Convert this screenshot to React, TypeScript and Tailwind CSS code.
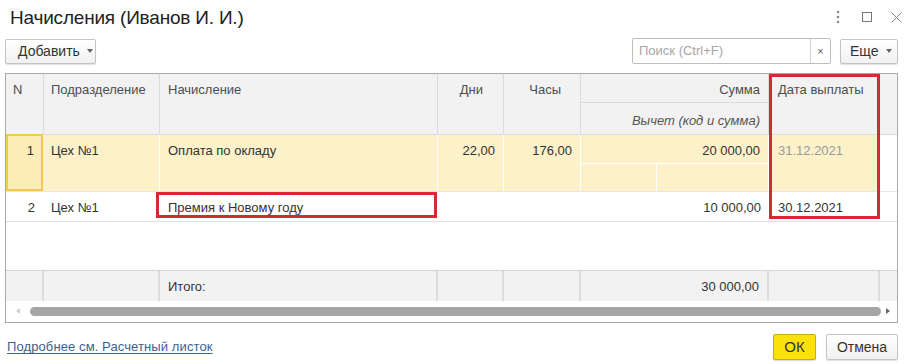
import React from "react";

const font = { fontFamily: '"Liberation Sans", Arial, sans-serif' };

function Caret() {
  return (
    <svg width="6" height="4" viewBox="0 0 6 4" className="ml-[7px]">
      <path d="M0 0 L6 0 L3 4 Z" fill="#666" />
    </svg>
  );
}

const cols = "grid grid-cols-[38px_116px_278px_66px_77px_188px_111px_17px]";

export default function App() {
  return (
    <div className="relative w-[911px] h-[364px] bg-white overflow-hidden text-[#333]" style={font}>
      {/* Title bar */}
      <div className="flex items-center h-[34px] pl-[10px] pr-[9px]">
        <div className="text-[19px] text-[#222] leading-none tracking-[-0.2px] pt-[1px]">Начисления (Иванов И. И.)</div>
        <div className="ml-auto flex items-center text-[#888]">
          <svg width="4" height="14" viewBox="0 0 4 14">
            <circle cx="2" cy="2" r="1.3" fill="#888" />
            <circle cx="2" cy="7" r="1.3" fill="#888" />
            <circle cx="2" cy="12" r="1.3" fill="#888" />
          </svg>
          <svg width="10" height="10" viewBox="0 0 10 10" className="ml-[22px]">
            <rect x="0.5" y="0.5" width="9" height="9" fill="none" stroke="#777" strokeWidth="1" />
          </svg>
          <svg width="11" height="11" viewBox="0 0 11 11" className="ml-[19px]">
            <path d="M0.5 0.5 L10.5 10.5 M10.5 0.5 L0.5 10.5" stroke="#888" strokeWidth="1" />
          </svg>
        </div>
      </div>

      {/* Toolbar */}
      <div className="flex items-center h-[26px] mt-[4px] pl-[5px] pr-[13px]">
        <button className="flex items-center h-[25px] w-[91px] pl-[12px] border border-[#c4c4c4] rounded-[2px] bg-gradient-to-b from-white to-[#f1f1f1] shadow-[0_1px_1px_rgba(0,0,0,0.12)] text-[14px] text-[#333]">
          Добавить
          <Caret />
        </button>
        <div className="ml-auto flex items-center h-[26px] w-[199px] border border-[#bdbdbd] rounded-[2px] bg-white">
          <div className="flex-1 pl-[6px] text-[13px] text-[#a6a6a6]">Поиск (Ctrl+F)</div>
          <div className="w-[20px] h-full border-l border-[#cfcfcf] flex items-center justify-center text-[11px] text-[#555]">×</div>
        </div>
        <button className="ml-[9px] flex items-center h-[25px] w-[58px] pl-[9px] border border-[#c4c4c4] rounded-[2px] bg-gradient-to-b from-white to-[#f1f1f1] shadow-[0_1px_1px_rgba(0,0,0,0.12)] text-[14px] text-[#333]">
          Еще
          <Caret />
        </button>
      </div>

      {/* Table */}
      <div className="relative mt-[9px] ml-[5px] w-[893px] h-[250px] border border-[#a9a9a9] text-[13px]">
        {/* header */}
        <div className={`${cols} h-[61px] bg-[#f2f2f2] text-[#4d4d4d] border-b border-[#dcdcdc]`}>
          <div className="border-r border-[#dcdcdc] pl-[7px] pt-[6px]">N</div>
          <div className="border-r border-[#dcdcdc] pl-[7px] pt-[6px]">Подразделение</div>
          <div className="border-r border-[#dcdcdc] pl-[8px] pt-[6px]">Начисление</div>
          <div className="border-r border-[#dcdcdc] pr-[20px] pt-[6px] text-right">Дни</div>
          <div className="border-r border-[#dcdcdc] pr-[19px] pt-[6px] text-right">Часы</div>
          <div className="border-r border-[#dcdcdc] flex flex-col">
            <div className="h-[29px] border-b border-[#dcdcdc] pr-[8px] pt-[6px] text-right">Сумма</div>
            <div className="flex-1 pr-[8px] pt-[8px] text-right italic text-[#555]">Вычет (код и сумма)</div>
          </div>
          <div className="border-r border-[#dcdcdc] pl-[9px] pt-[6px]">Дата выплаты</div>
          <div />
        </div>
        {/* row 1 */}
        <div className={`${cols} h-[57px] bg-[#fdf1c9] border-b border-[#e6e6e6]`}>
          <div className="border-2 border-[#f2c94a] bg-[#fcecb8] text-right pr-[7px] pt-[5px] -mt-[1px] mr-[1px]">1</div>
          <div className="border-r border-white pl-[7px] pt-[6px]">Цех №1</div>
          <div className="border-r border-white pl-[8px] pt-[6px]">Оплата по окладу</div>
          <div className="border-r border-white pr-[8px] pt-[6px] text-right">22,00</div>
          <div className="border-r border-white pr-[8px] pt-[6px] text-right">176,00</div>
          <div className="border-r border-white flex flex-col">
            <div className="h-[29px] border-b border-white pr-[8px] pt-[6px] text-right">20 000,00</div>
            <div className="flex-1 flex">
              <div className="w-[76px] border-r border-white" />
              <div className="flex-1" />
            </div>
          </div>
          <div className="border-r border-white pl-[9px] pt-[6px] text-[#9a9a9a]">31.12.2021</div>
          <div className="bg-white" />
        </div>
        {/* row 2 */}
        <div className={`${cols} h-[30px] border-b border-[#e0e0e0]`}>
          <div className="text-right pr-[9px] pt-[6px]">2</div>
          <div className="pl-[7px] pt-[6px]">Цех №1</div>
          <div className="pl-[8px] pt-[6px]">Премия к Новому году</div>
          <div />
          <div />
          <div className="pr-[8px] pt-[6px] text-right">10 000,00</div>
          <div className="pl-[9px] pt-[6px]">30.12.2021</div>
          <div />
        </div>
        <div className="h-[48px]" />
        {/* footer */}
        <div className={`${cols} h-[31px] bg-[#f2f2f2] border-t border-[#d4d4d4]`}>
          <div className="border-r-2 border-[#dcdcdc]" />
          <div className="border-r-2 border-[#dcdcdc]" />
          <div className="border-r-2 border-[#dcdcdc] pl-[8px] pt-[6px]">Итого:</div>
          <div className="border-r-2 border-[#dcdcdc]" />
          <div className="border-r-2 border-[#dcdcdc]" />
          <div className="border-r-2 border-[#dcdcdc] pr-[8px] pt-[6px] text-right">30 000,00</div>
          <div className="border-r-2 border-[#dcdcdc]" />
          <div />
        </div>
        {/* scrollbar */}
        <div className="flex items-center h-[20px] pl-[10px] pr-[7px]">
          <svg width="4" height="6" viewBox="0 0 4 6"><path d="M4 0 L0 3 L4 6 Z" fill="#cfcfcf" /></svg>
          <div className="ml-[10px] h-[9px] w-[851px] rounded-full bg-[#a6a6a6]" />
          <svg width="4" height="6" viewBox="0 0 4 6" className="ml-auto"><path d="M0 0 L4 3 L0 6 Z" fill="#666" /></svg>
        </div>

        {/* red highlights */}
        <div className="absolute left-[150px] top-[118px] w-[281px] h-[26px] border-[3px] border-[#d42a34]" />
        <div className="absolute left-[763px] top-[0px] w-[111px] h-[145px] border-[3px] border-[#d42a34]" />
      </div>

      {/* Bottom */}
      <div className="flex items-center mt-[11px] pl-[7px] pr-[13px]">
        <a className="text-[13px] text-[#3b5f91] underline underline-offset-2 decoration-1 tracking-[0.1px]">Подробнее см. Расчетный листок</a>
        <button className="ml-auto h-[26px] w-[43px] border border-[#c9ad00] rounded-[2px] bg-[#fbe10c] text-[15px] text-[#333] shadow-[0_1px_1px_rgba(0,0,0,0.15)]">ОК</button>
        <button className="ml-[10px] h-[26px] w-[72px] border border-[#c4c4c4] rounded-[2px] bg-gradient-to-b from-white to-[#f1f1f1] shadow-[0_1px_1px_rgba(0,0,0,0.12)] text-[14px] text-[#333]">Отмена</button>
      </div>
    </div>
  );
}
